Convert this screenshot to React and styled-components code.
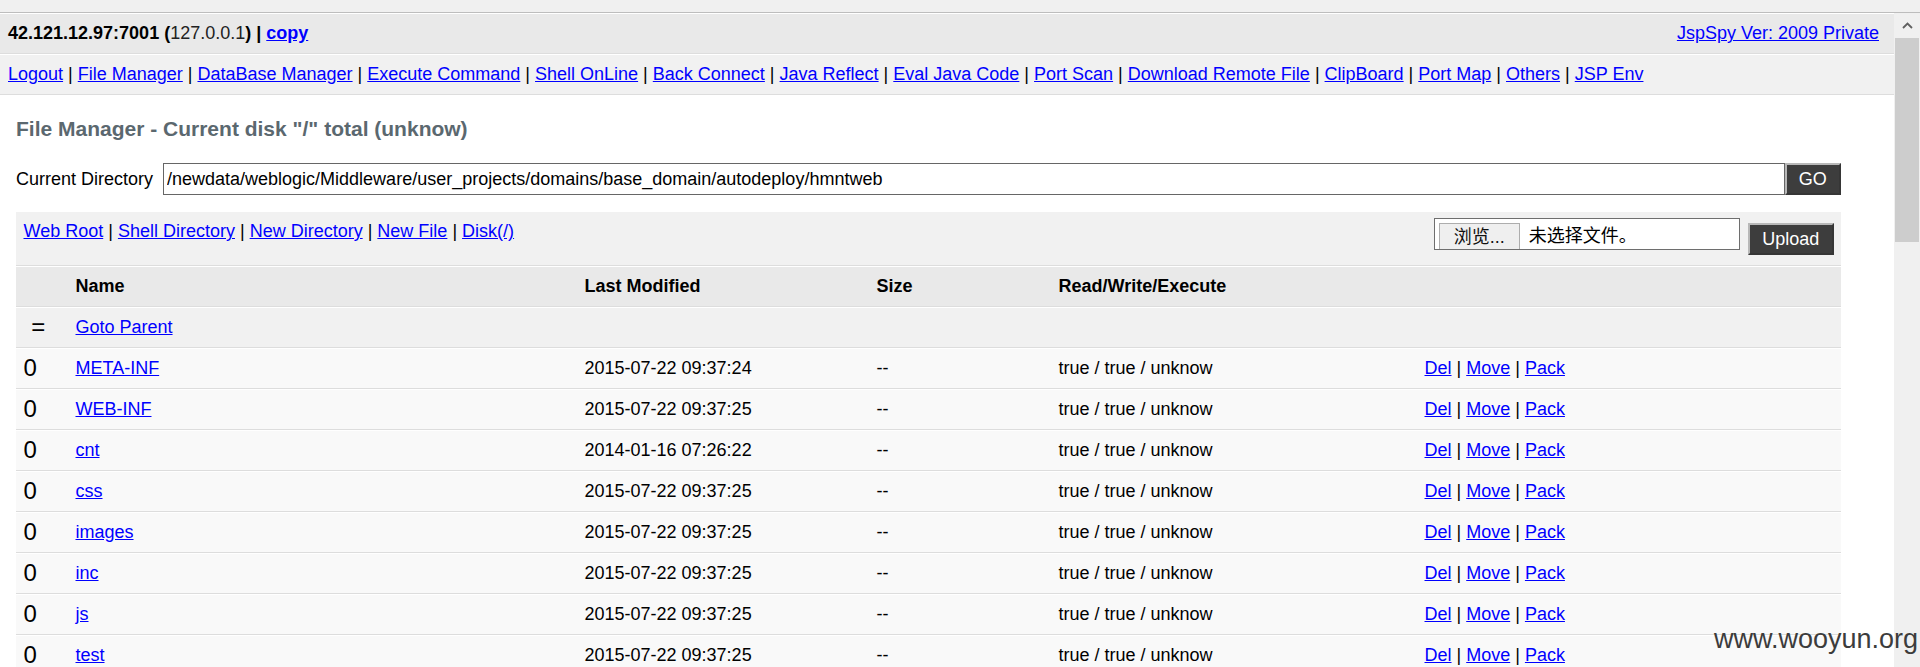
import React from "react";
import styled, { createGlobalStyle } from "styled-components";

const Global = createGlobalStyle`
  html, body { margin: 0; padding: 0; background: #fff; }
  body {
    font-family: "Liberation Sans", Arial, sans-serif;
    font-size: 18px;
    line-height: 24px;
    color: #000;
  }
`;

const Frame = styled.div`
  position: relative;
  display: flex;
  flex-direction: column;
  height: 667px;
  overflow: hidden;
`;

const TopStrip = styled.div`
  flex: none;
  height: 12px;
  background: #f0f0f0;
  border-bottom: 1px solid #bdbdbd;
`;

const Body = styled.div`
  display: flex;
  flex: 1;
  min-height: 0;
`;

const Main = styled.div`
  flex: 1;
  min-width: 0;
  overflow: hidden;
`;

const Bar = styled.div`
  display: flex;
  justify-content: space-between;
  align-items: center;
  border-top: 1px solid #fff;
  border-bottom: 1px solid #ddd;
  background: ${(p) => (p.$head ? "#e9e9e9" : "#f1f1f1")};
  font-weight: ${(p) => (p.$head ? "bold" : "normal")};
  padding: 7px 15px 8px 8px;
  line-height: 24px;
  white-space: nowrap;
`;

const Link = styled.a`
  color: #00f;
  text-decoration: underline;
  font-weight: ${(p) => (p.$bold ? "bold" : "normal")};
  cursor: pointer;
`;

const LocalIp = styled.span`
  font-weight: normal;
  color: #222;
`;

const Content = styled.div`
  padding: 16px 16px 0 16px;
`;

const Title = styled.h2`
  margin: 0;
  height: 36px;
  line-height: 36px;
  font-size: 21px;
  font-weight: bold;
  color: #5b686f;
`;

const DirForm = styled.form`
  display: flex;
  align-items: center;
  width: 98%;
  height: 32px;
  margin: 16px 0 0 0;
`;

const DirLabel = styled.label`
  flex: none;
  width: 147px;
`;

const PathInput = styled.input`
  flex: 1;
  min-width: 0;
  height: 32px;
  box-sizing: border-box;
  border: 1px solid #666;
  padding: 0 3px;
  font-family: "Liberation Sans", Arial, sans-serif;
  font-size: 18px;
  color: #000;
  background: #fff;
  outline: none;
`;

const DarkButton = styled.button`
  flex: none;
  width: ${(p) => p.$w}px;
  height: 32px;
  box-sizing: border-box;
  margin: ${(p) => p.$m || "0"};
  padding: 0;
  background: #3d3d3d;
  color: #fff;
  border-width: 2px;
  border-style: outset;
  border-color: #b8b8b8 #8a8a8a #8a8a8a #b8b8b8;
  font-family: "Liberation Sans", Arial, sans-serif;
  font-size: 18px;
  line-height: 24px;
`;

const FileTable = styled.table`
  width: 98%;
  table-layout: fixed;
  border-collapse: separate;
  border-spacing: 0;
  margin-top: 16px;
`;

const bgFor = { head: "#e9e9e9", alt1: "#f1f1f1", alt2: "#f9f9f9" };

const Cell = styled.td`
  border-top: 1px solid #fff;
  border-bottom: 1px solid #ddd;
  background: ${(p) => bgFor[p.$kind]};
  font-weight: ${(p) => (p.$kind === "head" ? "bold" : "normal")};
  padding: 7px 15px 8px 7.5px;
  height: 24px;
  line-height: 24px;
  white-space: nowrap;
  text-align: ${(p) => (p.$center ? "center" : "left")};
  vertical-align: middle;
`;

const ToolCell = styled.td`
  border-top: 1px solid #fff;
  border-bottom: 1px solid #ddd;
  background: #f1f1f1;
  padding: 7px 7px 10px 7.5px;
  vertical-align: top;
`;

const ToolRow = styled.div`
  display: flex;
  justify-content: space-between;
  align-items: flex-start;
  line-height: 24px;
  white-space: nowrap;
`;

const UploadForm = styled.form`
  display: flex;
  align-items: flex-start;
  margin: -1px 0 0 0;
`;

const FileBox = styled.div`
  display: flex;
  align-items: flex-end;
  width: 306px;
  height: 32px;
  box-sizing: border-box;
  border: 1px solid #6e6e6e;
  background: #fff;
  font-family: "Liberation Sans", "Noto Sans CJK SC", sans-serif;
  font-size: 18px;
`;

const BrowseButton = styled.span`
  flex: none;
  width: 81px;
  height: 26px;
  margin-left: 4px;
  box-sizing: border-box;
  border: 1px solid #adadad;
  border-bottom: none;
  background: #efefef;
  text-align: center;
  line-height: 26px;
  color: #111;
`;

const NoFile = styled.span`
  margin-left: 9px;
  line-height: 26px;
  color: #000;
`;

const Glyph = styled.span`
  display: inline-block;
  vertical-align: top;
  height: 24px;
  font-size: 24px;
  line-height: 24px;
`;

const Scrollbar = styled.div`
  flex: none;
  width: 26px;
  background: #f0f0f0;
  display: flex;
  flex-direction: column;
  align-items: stretch;
`;

const ArrowBox = styled.div`
  height: 25px;
  display: flex;
  align-items: center;
  justify-content: center;
`;

const Thumb = styled.div`
  height: 204px;
  margin: 0 1px;
  background: #cdcdcd;
`;

const Watermark = styled.div`
  position: absolute;
  left: 1714px;
  top: 622px;
  font-family: "Liberation Sans", Arial, sans-serif;
  font-size: 27px;
  line-height: 34px;
  color: #3c3c3c;
  white-space: nowrap;
  pointer-events: none;
`;

const navItems = [
  "Logout",
  "File Manager",
  "DataBase Manager",
  "Execute Command",
  "Shell OnLine",
  "Back Connect",
  "Java Reflect",
  "Eval Java Code",
  "Port Scan",
  "Download Remote File",
  "ClipBoard",
  "Port Map",
  "Others",
  "JSP Env",
];

const toolItems = ["Web Root", "Shell Directory", "New Directory", "New File", "Disk(/)"];

const rows = [
  ["META-INF", "2015-07-22 09:37:24"],
  ["WEB-INF", "2015-07-22 09:37:25"],
  ["cnt", "2014-01-16 07:26:22"],
  ["css", "2015-07-22 09:37:25"],
  ["images", "2015-07-22 09:37:25"],
  ["inc", "2015-07-22 09:37:25"],
  ["js", "2015-07-22 09:37:25"],
  ["test", "2015-07-22 09:37:25"],
];

function LinkList({ items }) {
  return (
    <span>
      {items.map((t, i) => (
        <React.Fragment key={t}>
          {i > 0 && " | "}
          <Link>{t}</Link>
        </React.Fragment>
      ))}
    </span>
  );
}

export default function App() {
  return (
    <>
      <Global />
      <Frame>
        <TopStrip />
        <Body>
          <Main>
            <Bar $head>
              <span>
                42.121.12.97:7001 (<LocalIp>127.0.0.1</LocalIp>) | <Link $bold>copy</Link>
              </span>
              <Link>JspSpy Ver: 2009 Private</Link>
            </Bar>
            <Bar>
              <LinkList items={navItems} />
            </Bar>
            <Content>
              <Title>File Manager - Current disk "/" total (unknow)</Title>
              <DirForm onSubmit={(e) => e.preventDefault()}>
                <DirLabel>Current Directory</DirLabel>
                <PathInput
                  readOnly
                  value="/newdata/weblogic/Middleware/user_projects/domains/base_domain/autodeploy/hmntweb"
                />
                <DarkButton $w={56} type="button">GO</DarkButton>
              </DirForm>
              <FileTable>
                <colgroup>
                  <col style={{ width: "52px" }} />
                  <col style={{ width: "509px" }} />
                  <col style={{ width: "292px" }} />
                  <col style={{ width: "182px" }} />
                  <col style={{ width: "366px" }} />
                  <col />
                </colgroup>
                <tbody>
                  <tr>
                    <ToolCell colSpan={6}>
                      <ToolRow>
                        <LinkList items={toolItems} />
                        <UploadForm onSubmit={(e) => e.preventDefault()}>
                          <FileBox>
                            <BrowseButton>浏览...</BrowseButton>
                            <NoFile>未选择文件。</NoFile>
                          </FileBox>
                          <DarkButton $w={86} $m="5px 0 0 8px" type="button">
                            Upload
                          </DarkButton>
                        </UploadForm>
                      </ToolRow>
                    </ToolCell>
                  </tr>
                  <tr>
                    <Cell $kind="head" />
                    <Cell $kind="head">Name</Cell>
                    <Cell $kind="head">Last Modified</Cell>
                    <Cell $kind="head">Size</Cell>
                    <Cell $kind="head">Read/Write/Execute</Cell>
                    <Cell $kind="head" />
                  </tr>
                  <tr>
                    <Cell $kind="alt1" $center>
                      <Glyph>=</Glyph>
                    </Cell>
                    <Cell $kind="alt1" colSpan={5}>
                      <Link>Goto Parent</Link>
                    </Cell>
                  </tr>
                  {rows.map(([name, date]) => (
                    <tr key={name}>
                      <Cell $kind="alt2">
                        <Glyph>0</Glyph>
                      </Cell>
                      <Cell $kind="alt2">
                        <Link>{name}</Link>
                      </Cell>
                      <Cell $kind="alt2">{date}</Cell>
                      <Cell $kind="alt2">--</Cell>
                      <Cell $kind="alt2">true / true / unknow</Cell>
                      <Cell $kind="alt2">
                        <Link>Del</Link> | <Link>Move</Link> | <Link>Pack</Link>
                      </Cell>
                    </tr>
                  ))}
                </tbody>
              </FileTable>
            </Content>
          </Main>
          <Scrollbar>
            <ArrowBox>
              <svg width="11" height="7" viewBox="0 0 11 7">
                <path d="M1 6 L5.5 1.5 L10 6" fill="none" stroke="#606060" strokeWidth="1.8" />
              </svg>
            </ArrowBox>
            <Thumb />
          </Scrollbar>
        </Body>
        <Watermark>www.wooyun.org</Watermark>
      </Frame>
    </>
  );
}
